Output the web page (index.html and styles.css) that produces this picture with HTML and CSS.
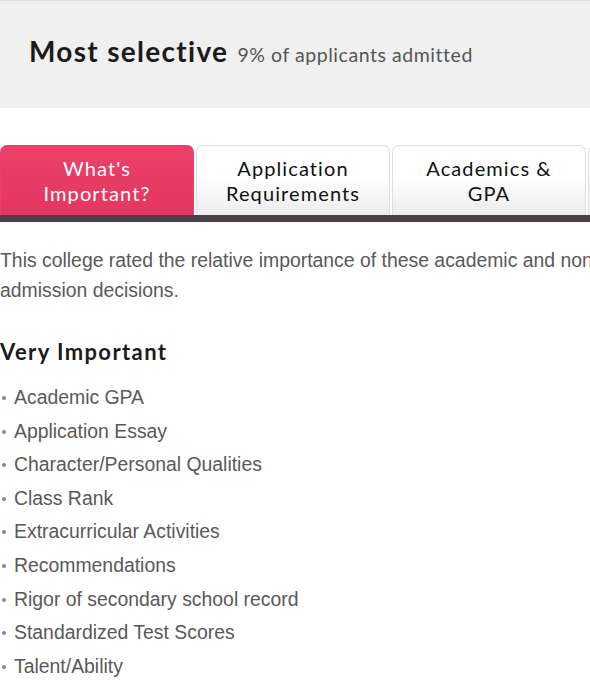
FILE: index.html
```html
<!DOCTYPE html>
<html lang="en">
<head>
<meta charset="utf-8">
<title>Admissions</title>
<link rel="stylesheet" href="styles.css">
</head>
<body>
<div class="page">
  <header class="hero">
    <h1 class="hero-title">Most selective <span class="hero-sub">9% of applicants admitted</span></h1>
  </header>

  <nav class="tabs">
    <div class="tab tab-active">What's<br>Important?</div>
    <div class="tab">Application<br>Requirements</div>
    <div class="tab">Academics &amp;<br>GPA</div>
    <div class="tab tab-more"></div>
  </nav>
  <div class="tabbar"></div>

  <section class="content">
    <p class="intro">This college rated the relative importance of these academic and nonacademic factors in its first-year admission decisions.</p>
    <h2 class="section-title">Very Important</h2>
    <ul class="factors">
      <li>Academic GPA</li>
      <li>Application Essay</li>
      <li>Character/Personal Qualities</li>
      <li>Class Rank</li>
      <li>Extracurricular Activities</li>
      <li>Recommendations</li>
      <li>Rigor of secondary school record</li>
      <li>Standardized Test Scores</li>
      <li>Talent/Ability</li>
    </ul>
  </section>
</div>
</body>
</html>
```
FILE: styles.css
```css
html, body {
  margin: 0;
  padding: 0;
  background: #ffffff;
}
body {
  width: 590px;
  height: 696px;
  overflow: hidden;
}
.page {
  width: 980px;
}
.hero {
  width: 590px;
  height: 108px;
  border-top: 1px solid #dcdcdc;
  background: #f0f0f0;
  display: flex;
  align-items: center;
  padding-left: 29px;
  box-sizing: border-box;
}
.hero-title {
  margin: -3px 0 0;
  font-family: Lato, "Open Sans", sans-serif;
  font-weight: 700;
  font-size: 28px;
  letter-spacing: 1.3px;
  color: #1b1b1b;
  line-height: 34px;
}
.hero-sub {
  font-weight: 400;
  font-size: 19.5px;
  letter-spacing: 0.55px;
  color: #555555;
  margin-left: 1px;
}
.tabs {
  display: flex;
  gap: 2px;
  margin-top: 37px;
}
.tab {
  width: 194px;
  height: 70px;
  box-sizing: border-box;
  flex: none;
  border: 1px solid #dddddd;
  border-bottom: none;
  border-radius: 7px 7px 0 0;
  background: linear-gradient(to bottom, #ffffff 0%, #ffffff 45%, #ececec 100%);
  font-family: Lato, "Open Sans", sans-serif;
  font-size: 20px;
  letter-spacing: 1.1px;
  line-height: 25px;
  color: #111111;
  text-align: center;
  display: flex;
  align-items: center;
  justify-content: center;
}
.tab-active {
  border-color: #e8416a;
  background: linear-gradient(to bottom, #ea416b 0%, #e5365f 100%);
  color: #ffffff;
}
.tabbar {
  height: 7px;
  background: #4a414b;
}
.content {
  width: 940px;
}
.intro {
  margin: 23px 0 0;
  font-family: "Liberation Sans", Arial, sans-serif;
  font-size: 19.4px;
  line-height: 30px;
  color: #595959;
}
.section-title {
  margin: 33px 0 0;
  font-family: Lato, "Open Sans", sans-serif;
  font-weight: 700;
  font-size: 22px;
  letter-spacing: 1.4px;
  line-height: 28px;
  color: #1b1b1b;
}
.factors {
  list-style: none;
  margin: 15px 0 0;
  padding: 0;
}
.factors li {
  position: relative;
  padding-left: 14px;
  font-family: "Liberation Sans", Arial, sans-serif;
  font-size: 19.4px;
  line-height: 33.6px;
  color: #595959;
}
.factors li::before {
  content: "";
  position: absolute;
  left: 2px;
  top: 15px;
  width: 4px;
  height: 4px;
  border-radius: 50%;
  background: #888888;
}
```
